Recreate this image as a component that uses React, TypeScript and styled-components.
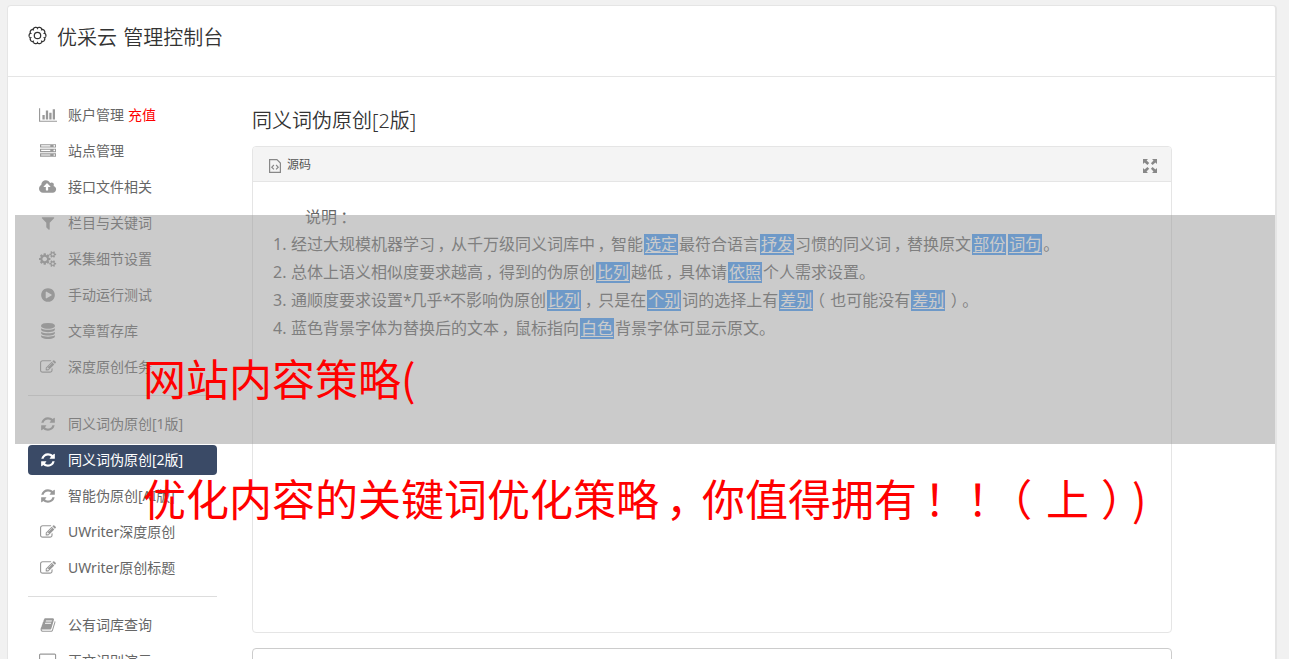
import React from 'react';
import styled, { createGlobalStyle } from 'styled-components';

const sans = `"Noto Sans", "Noto Sans CJK SC", sans-serif`;

const GlobalStyle = createGlobalStyle`
  * {
    box-sizing: border-box;
  }
  body {
    margin: 0;
    height: 659px;
    overflow: hidden;
    background: #f1f1f1;
    font-family: ${sans};
    font-weight: 400;
    color: #666;
  }
`;

const Page = styled.div`
  position: relative;
  height: 659px;
  padding: 5px 12px 0 7px;
  overflow: hidden;
`;

const Card = styled.div`
  height: 700px;
  background: #fff;
  border: 1px solid #e5e5e5;
  border-right-width: 2px;
  border-radius: 4px;
`;

const CardHeader = styled.header`
  height: 71px;
  padding: 15px 20px 0;
  display: flex;
  align-items: flex-start;
  border-bottom: 1px solid #e5e5e5;
  color: #333;
  svg {
    width: 19px;
    height: 19px;
    margin-top: 5px;
  }
`;

const CardTitle = styled.h1`
  margin: 2px 0 0 10px;
  font-size: 20px;
  font-weight: 350;
  line-height: 30px;
  word-spacing: 1px;
`;

const Columns = styled.div`
  display: flex;
  padding: 23px 0 0 20px;
`;

const Sidebar = styled.nav`
  width: 189px;
  flex: none;
`;

const NavItem = styled.a<{ $active?: boolean }>`
  height: 30px;
  margin-bottom: 6px;
  display: flex;
  align-items: center;
  border-radius: 4px;
  font-size: 14px;
  line-height: 30px;
  white-space: nowrap;
  color: ${({ $active }) => ($active ? '#fff' : '#666')};
  background: ${({ $active }) => ($active ? '#3a4a66' : 'transparent')};
  svg {
    color: ${({ $active }) => ($active ? '#fff' : '#999')};
  }
`;

const IconSlot = styled.span`
  width: 40px;
  display: flex;
  justify-content: center;
  flex: none;
`;

const Recharge = styled.span`
  margin-left: 4px;
  color: #f00;
`;

const Divider = styled.hr`
  height: 1px;
  margin: 13px 0;
  border: none;
  background: #ddd;
`;

const NavIcon = styled.svg`
  height: 16px;
  fill: currentColor;
`;

const Main = styled.main`
  width: 920px;
  margin-left: 35px;
`;

const Heading = styled.h2`
  margin: 5px 0 10px;
  font-size: 20px;
  font-weight: 350;
  line-height: 31px;
  color: #333;
`;

const Panel = styled.section`
  height: 487px;
  border: 1px solid #e5e5e5;
  border-radius: 4px;
`;

const PanelHeader = styled.div`
  height: 35px;
  padding: 0 14px 0 16px;
  display: flex;
  align-items: center;
  border-bottom: 1px solid #e5e5e5;
  border-radius: 3px 3px 0 0;
  background: #f4f4f4;
  font-size: 12px;
  color: #555;
  svg {
    margin-top: 4px;
  }
`;

const PanelLabel = styled.span`
  flex: 1;
  margin-left: 6px;
`;

const PanelBody = styled.div`
  padding: 21px 0 0 20px;
  font-size: 16px;
  line-height: 28px;
`;

const Intro = styled.p`
  height: 27px;
  margin: 0;
  padding-left: 32px;
`;

const Rule = styled.div`
  display: flex;
  height: 28px;
  white-space: nowrap;
`;

const RuleNumber = styled.span`
  width: 18px;
  flex: none;
`;

const Swap = styled.span`
  display: inline-block;
  height: 21px;
  margin: 0 1px;
  padding: 0 1px;
  background: #459bf9;
  color: #fff;
  line-height: 21px;
  text-decoration: underline;
  text-underline-offset: 2px;
  text-decoration-thickness: 1px;
`;

// full-width punctuation, moved to the middle of its cell
const Wide = styled.span<{ $shift: number }>`
  display: inline-block;
  width: 1em;
  line-height: 1;
  font-family: "Noto Sans CJK SC", sans-serif;
  transform: translateX(${({ $shift }) => $shift}em);
`;

const Star = styled.span`
  letter-spacing: -1.3px;
`;

const NextBox = styled.div`
  height: 60px;
  margin-top: 15px;
  border: 1px solid #ccc;
  border-radius: 4px;
`;

const Shade = styled.div`
  position: absolute;
  left: 15px;
  top: 215px;
  width: 1260px;
  height: 229px;
  background: rgba(151, 151, 151, 0.5);
`;

const Banner = styled.div`
  position: absolute;
  left: 143px;
  top: 317px;
  font-family: "Noto Sans CJK SC", sans-serif;
  font-size: 43px;
  font-weight: 400;
  line-height: 120px;
  color: #f00;
  white-space: nowrap;
`;

const BannerLine = styled.div`
  height: 120px;
`;

const icons = {
  chart: {
    width: 2048,
    d: 'M640 896v512h-256v-512h256zm384-512v1024h-256v-1024h256zm1024 1152v128h-2048v-1536h128v1408h1920zm-640-896v768h-256v-768h256zm384-384v1152h-256v-1152h256z',
  },
  server: {
    width: 1792,
    d: 'M128 1408h1024v-128h-1024v128zm0-512h1024v-128h-1024v128zm1568 448q0-40-28-68t-68-28-68 28-28 68 28 68 68 28 68-28 28-68zm-1568-960h1024v-128h-1024v128zm1568 448q0-40-28-68t-68-28-68 28-28 68 28 68 68 28 68-28 28-68zm0-512q0-40-28-68t-68-28-68 28-28 68 28 68 68 28 68-28 28-68zm96 832v384h-1792v-384h1792zm0-512v384h-1792v-384h1792zm0-512v384h-1792v-384h1792z',
  },
  cloud: {
    width: 1920,
    d: 'M1280 864q0-14-9-23l-352-352q-9-9-23-9t-23 9l-351 351q-10 12-10 24 0 14 9 23t23 9h224v352q0 13 9.5 22.5t22.5 9.5h192q13 0 22.5-9.5t9.5-22.5v-352h224q13 0 22.5-9.5t9.5-22.5zm640 288q0 159-112.5 271.5t-271.5 112.5h-1088q-185 0-316.5-131.5t-131.5-316.5q0-130 70-240t188-165q-2-30-2-43 0-212 150-362t362-150q156 0 285.5 87t188.5 231q71-62 166-62 106 0 181 75t75 181q0 76-41 138 130 31 213.5 135.5t83.5 238.5z',
  },
  filter: {
    width: 1792,
    d: 'M1595 295q17 41-14 70l-493 493v742q0 42-39 59-13 5-25 5-27 0-45-19l-256-256q-19-19-19-45v-486l-493-493q-31-29-14-70 17-39 59-39h1280q42 0 59 39z',
  },
  cogs: {
    width: 1920,
    d: 'M896 896q0-106-75-181t-181-75-181 75-75 181 75 181 181 75 181-75 75-181zm768 512q0-52-38-90t-90-38-90 38-38 90q0 53 37.5 90.5t90.5 37.5 90.5-37.5 37.5-90.5zm0-1024q0-52-38-90t-90-38-90 38-38 90q0 53 37.5 90.5t90.5 37.5 90.5-37.5 37.5-90.5zm-384 421v185q0 10-7 19.5t-16 10.5l-155 24q-11 35-32 76 34 48 90 115 7 11 7 20 0 12-7 19-23 30-82.5 89.5t-78.5 59.5q-11 0-21-7l-115-90q-37 19-77 31-11 108-23 155-7 24-30 24h-186q-11 0-20-7.5t-10-17.5l-23-153q-34-10-75-31l-118 89q-7 7-20 7-11 0-21-8-144-133-144-160 0-9 7-19 10-14 41-53t47-61q-23-44-35-82l-152-24q-10-1-17-9.5t-7-19.5v-185q0-10 7-19.5t16-10.5l155-24q11-35 32-76-34-48-90-115-7-11-7-20 0-12 7-20 22-30 82-89t79-59q11 0 21 7l115 90q34-18 77-32 11-108 23-154 7-24 30-24h186q11 0 20 7.5t10 17.5l23 153q34 10 75 31l118-89q8-7 20-7 11 0 21 8 144 133 144 160 0 8-7 19-12 16-42 54t-45 60q23 48 34 82l152 23q10 2 17 10.5t7 19.5zm640 533v140q0 16-149 31-12 27-30 52 51 113 51 138 0 4-4 7-122 71-124 71-8 0-46-47t-52-68q-20 2-30 2t-30-2q-14 21-52 68t-46 47q-2 0-124-71-4-3-4-7 0-25 51-138-18-25-30-52-149-15-149-31v-140q0-16 149-31 13-29 30-52-51-113-51-138 0-4 4-7 4-2 35-20t59-34 30-16q8 0 46 46.5t52 67.5q20-2 30-2t30 2q51-71 92-112l6-2q4 0 124 70 4 3 4 7 0 25-51 138 17 23 30 52 149 15 149 31zm0-1024v140q0 16-149 31-12 27-30 52 51 113 51 138 0 4-4 7-122 71-124 71-8 0-46-47t-52-68q-20 2-30 2t-30-2q-14 21-52 68t-46 47q-2 0-124-71-4-3-4-7 0-25 51-138-18-25-30-52-149-15-149-31v-140q0-16 149-31 13-29 30-52-51-113-51-138 0-4 4-7 4-2 35-20t59-34 30-16q8 0 46 46.5t52 67.5q20-2 30-2t30 2q51-71 92-112l6-2q4 0 124 70 4 3 4 7 0 25-51 138 17 23 30 52 149 15 149 31z',
  },
  play: {
    width: 1792,
    d: 'M896 128q209 0 385.5 103t279.5 279.5 103 385.5-103 385.5-279.5 279.5-385.5 103-385.5-103-279.5-279.5-103-385.5 103-385.5 279.5-279.5 385.5-103zm384 823q32-18 32-55t-32-55l-544-320q-31-19-64-1-32 19-32 56v640q0 37 32 56 16 8 32 8 17 0 32-9z',
  },
  database: {
    width: 1792,
    d: 'M896 768q237 0 443-43t325-127v170q0 69-103 128t-280 93.5-385 34.5-385-34.5-280-93.5-103-128v-170q119 84 325 127t443 43zm0 768q237 0 443-43t325-127v170q0 69-103 128t-280 93.5-385 34.5-385-34.5-280-93.5-103-128v-170q119 84 325 127t443 43zm0-384q237 0 443-43t325-127v170q0 69-103 128t-280 93.5-385 34.5-385-34.5-280-93.5-103-128v-170q119 84 325 127t443 43zm0-1152q208 0 385 34.5t280 93.5 103 128v128q0 69-103 128t-280 93.5-385 34.5-385-34.5-280-93.5-103-128v-128q0-69 103-128t280-93.5 385-34.5z',
  },
  edit: {
    width: 1792,
    d: 'M888 1184l116-116-152-152-116 116v56h96v96h56zm440-720q-16-16-33 1l-350 350q-17 17-1 33t33-1l350-350q17-17 1-33zm80 594v190q0 119-84.5 203.5t-203.5 84.5h-832q-119 0-203.5-84.5t-84.5-203.5v-832q0-119 84.5-203.5t203.5-84.5h832q63 0 117 25 15 7 18 23 3 17-9 29l-49 49q-14 14-32 8-23-6-45-6h-832q-66 0-113 47t-47 113v832q0 66 47 113t113 47h832q66 0 113-47t47-113v-126q0-13 9-22l64-64q15-15 35-7t20 29zm-96-738l288 288-672 672h-288v-288zm444 132l-92 92-288-288 92-92q28-28 68-28t68 28l152 152q28 28 28 68t-28 68z',
  },
  refresh: {
    width: 1792,
    d: 'M1639 1056q0 5-1 7-64 268-268 434.5t-478 166.5q-146 0-282.5-55t-243.5-157l-129 129q-19 19-45 19t-45-19-19-45v-448q0-26 19-45t45-19h448q26 0 45 19t19 45-19 45l-137 137q71 66 161 102t187 36q134 0 250-65t186-179q11-17 53-117 8-23 30-23h192q13 0 22.5 9.5t9.5 22.5zm25-800v448q0 26-19 45t-45 19h-448q-26 0-45-19t-19-45 19-45l138-138q-148-137-349-137-134 0-250 65t-186 179q-11 17-53 117-8 23-30 23h-199q-13 0-22.5-9.5t-9.5-22.5v-7q65-268 270-434.5t480-166.5q146 0 284 55.5t245 156.5l130-129q19-19 45-19t45 19 19 45z',
  },
  book: {
    width: 1792,
    d: 'M1703 478q40 57 18 129l-275 906q-19 64-76.5 107.5t-122.5 43.5h-923q-77 0-148.5-53.5t-99.5-131.5q-24-67-2-127 0-4 3-27t4-37q1-8-3-21.5t-3-19.5q2-11 8-21t16.5-23.5 16.5-23.5q23-38 45-91.5t30-91.5q3-10 .5-30t-.5-28q3-11 17-28t17-23q21-36 42-92t25-90q1-9-2.5-32t.5-28q4-13 22-30.5t22-22.5q19-26 42.5-84.5t27.5-96.5q1-8-3-25.5t-2-26.5q2-8 9-18t18-23 17-21q8-12 16.5-30.5t15-35 16-36 19.5-32 26.5-23.5 36-11.5 47.5 5.5l-1 3q38-9 51-9h761q74 0 114 56t18 130l-274 906q-36 119-71.5 153.5t-128.5 34.5h-869q-27 0-38 15-11 16-1 43 24 70 144 70h923q29 0 56-15.5t35-41.5l300-987q7-22 5-57 38 15 59 43zm-1064 2q-4 13 2 22.5t20 9.5h608q13 0 25.5-9.5t16.5-22.5l21-64q4-13-2-22.5t-20-9.5h-608q-13 0-25.5 9.5t-16.5 22.5zm-83 256q-4 13 2 22.5t20 9.5h608q13 0 25.5-9.5t16.5-22.5l21-64q4-13-2-22.5t-20-9.5h-608q-13 0-25.5 9.5t-16.5 22.5z',
  },
  desktop: {
    width: 1920,
    d: 'M1792 1056v-832q0-13-9.5-22.5t-22.5-9.5h-1600q-13 0-22.5 9.5t-9.5 22.5v832q0 13 9.5 22.5t22.5 9.5h1600q13 0 22.5-9.5t9.5-22.5zm128-832v1088q0 66-47 113t-113 47h-544v192h-512v-192h-544q-66 0-113-47t-47-113v-1088q0-66 47-113t113-47h1600q66 0 113 47t47 113z',
  },
};

type IconName = keyof typeof icons;

interface NavEntry {
  icon: IconName;
  label: string;
  extra?: string;
  active?: boolean;
}

const navGroups: NavEntry[][] = [
  [
    { icon: 'chart', label: '账户管理', extra: '充值' },
    { icon: 'server', label: '站点管理' },
    { icon: 'cloud', label: '接口文件相关' },
    { icon: 'filter', label: '栏目与关键词' },
    { icon: 'cogs', label: '采集细节设置' },
    { icon: 'play', label: '手动运行测试' },
    { icon: 'database', label: '文章暂存库' },
    { icon: 'edit', label: '深度原创任务' },
  ],
  [
    { icon: 'refresh', label: '同义词伪原创[1版]' },
    { icon: 'refresh', label: '同义词伪原创[2版]', active: true },
    { icon: 'refresh', label: '智能伪原创[AI版]' },
    { icon: 'edit', label: 'UWriter深度原创' },
    { icon: 'edit', label: 'UWriter原创标题' },
  ],
  [
    { icon: 'book', label: '公有词库查询' },
    { icon: 'desktop', label: '正文识别演示' },
  ],
];

// words in braces are the replaced synonyms
const rules = [
  '经过大规模机器学习，从千万级同义词库中，智能{选定}最符合语言{抒发}习惯的同义词，替换原文{部份}{词句}。',
  '总体上语义相似度要求越高，得到的伪原创{比列}越低，具体请{依照}个人需求设置。',
  '通顺度要求设置*几乎*不影响伪原创{比列}，只是在{个别}词的选择上有{差别}（也可能没有{差别}）。',
  '蓝色背景字体为替换后的文本，鼠标指向{白色}背景字体可显示原文。',
];

const shifts: Record<string, number> = {
  '，': 0.16,
  '：': 0.2,
  '！': 0.16,
  '（': -0.32,
  '）': 0.28,
};

const renderText = (text: string) =>
  text.split(/(\{.*?\}|[，：！（）*])/).map((part, i) => {
    if (part.startsWith('{')) return <Swap key={i}>{part.slice(1, -1)}</Swap>;
    if (part === '*') return <Star key={i}>*</Star>;
    if (part in shifts) return <Wide key={i} $shift={shifts[part]}>{part}</Wide>;
    return part;
  });

const Icon: React.FC<{ name: IconName }> = ({ name }) => (
  <NavIcon viewBox={`0 0 ${icons[name].width} 1792`}>
    <path d={icons[name].d} />
  </NavIcon>
);

// ten rounded teeth around the rim
const gearPath = () => {
  const points: string[] = [];
  for (let i = 0; i < 160; i++) {
    const a = (i / 160) * Math.PI * 2;
    const r = 7.1 + 1.3 * Math.sqrt(Math.abs(Math.cos(a * 5)));
    points.push(`${(9.5 + r * Math.cos(a)).toFixed(2)} ${(9.5 + r * Math.sin(a)).toFixed(2)}`);
  }
  return `M${points.join('L')}Z`;
};

const GearIcon = () => (
  <svg viewBox="0 0 19 19" fill="none" stroke="currentColor" strokeWidth="1.25">
    <path d={gearPath()} />
    <circle cx="9.5" cy="9.5" r="3.2" />
  </svg>
);

const SourceIcon = () => (
  <svg width="12" height="14" viewBox="0 0 12 14" fill="none" stroke="#888" strokeWidth="1.2">
    <path d="M.6.6h7.3l3.5 3.5v9.3H.6z" />
    <path d="M4.9 6L2.8 8.2l2.1 2.2M7.1 6l2.1 2.2-2.1 2.2" />
  </svg>
);

const ExpandIcon = () => (
  <svg width="14" height="14" viewBox="0 0 14 14" fill="#888">
    <path d="M0 0h5L3.6 1.4l2.6 2.6L4.4 6 1.6 3.4 0 5zM14 0v5l-1.6-1.6L9.6 6 7.9 4.2l2.6-2.6L9 0zM0 14V9l1.6 1.6L4.4 8l1.8 1.8-2.7 2.7L5 14zM14 14H9l1.5-1.5-2.6-2.7L9.6 8l2.8 2.6L14 9z" />
  </svg>
);

export default function App() {
  return (
    <Page>
      <GlobalStyle />
      <Card>
        <CardHeader>
          <GearIcon />
          <CardTitle>优采云 管理控制台</CardTitle>
        </CardHeader>
        <Columns>
          <Sidebar>
            {navGroups.map((group, i) => (
              <React.Fragment key={i}>
                {i > 0 && <Divider />}
                {group.map((item) => (
                  <NavItem key={item.label} $active={item.active}>
                    <IconSlot>
                      <Icon name={item.icon} />
                    </IconSlot>
                    {item.label}
                    {item.extra && <Recharge>{item.extra}</Recharge>}
                  </NavItem>
                ))}
              </React.Fragment>
            ))}
          </Sidebar>
          <Main>
            <Heading>同义词伪原创[2版]</Heading>
            <Panel>
              <PanelHeader>
                <SourceIcon />
                <PanelLabel>源码</PanelLabel>
                <ExpandIcon />
              </PanelHeader>
              <PanelBody>
                <Intro>{renderText('说明：')}</Intro>
                {rules.map((rule, i) => (
                  <Rule key={rule}>
                    <RuleNumber>{i + 1}.</RuleNumber>
                    <span>{renderText(rule)}</span>
                  </Rule>
                ))}
              </PanelBody>
            </Panel>
            <NextBox />
          </Main>
        </Columns>
      </Card>
      <Shade />
      <Banner>
        <BannerLine>网站内容策略(</BannerLine>
        <BannerLine>{renderText('优化内容的关键词优化策略，你值得拥有！！（上）)')}</BannerLine>
      </Banner>
    </Page>
  );
}
